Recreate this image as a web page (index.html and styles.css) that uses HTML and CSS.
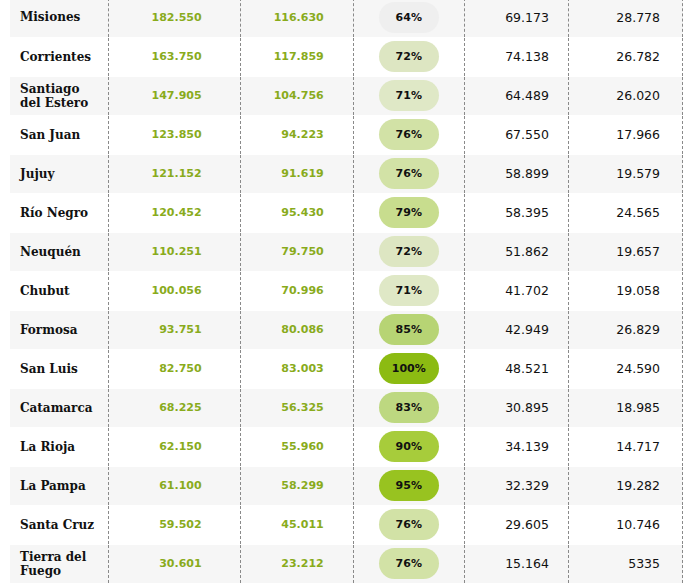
FILE: index.html
```html
<!DOCTYPE html>
<html lang="es">
<head>
<meta charset="utf-8">
<link rel="stylesheet" href="styles.css">
</head>
<body>
<table class="data">
<tbody>
<tr><td class="name">Misiones</td><td class="a">182.550</td><td class="b">116.630</td><td class="p"><span class="pill p64">64%</span></td><td class="c">69.173</td><td class="d">28.778</td></tr>
<tr><td class="name">Corrientes</td><td class="a">163.750</td><td class="b">117.859</td><td class="p"><span class="pill p72">72%</span></td><td class="c">74.138</td><td class="d">26.782</td></tr>
<tr><td class="name">Santiago del Estero</td><td class="a">147.905</td><td class="b">104.756</td><td class="p"><span class="pill p71">71%</span></td><td class="c">64.489</td><td class="d">26.020</td></tr>
<tr><td class="name">San Juan</td><td class="a">123.850</td><td class="b">94.223</td><td class="p"><span class="pill p76">76%</span></td><td class="c">67.550</td><td class="d">17.966</td></tr>
<tr><td class="name">Jujuy</td><td class="a">121.152</td><td class="b">91.619</td><td class="p"><span class="pill p76">76%</span></td><td class="c">58.899</td><td class="d">19.579</td></tr>
<tr><td class="name">Río Negro</td><td class="a">120.452</td><td class="b">95.430</td><td class="p"><span class="pill p79">79%</span></td><td class="c">58.395</td><td class="d">24.565</td></tr>
<tr><td class="name">Neuquén</td><td class="a">110.251</td><td class="b">79.750</td><td class="p"><span class="pill p72">72%</span></td><td class="c">51.862</td><td class="d">19.657</td></tr>
<tr><td class="name">Chubut</td><td class="a">100.056</td><td class="b">70.996</td><td class="p"><span class="pill p71">71%</span></td><td class="c">41.702</td><td class="d">19.058</td></tr>
<tr><td class="name">Formosa</td><td class="a">93.751</td><td class="b">80.086</td><td class="p"><span class="pill p85">85%</span></td><td class="c">42.949</td><td class="d">26.829</td></tr>
<tr><td class="name">San Luis</td><td class="a">82.750</td><td class="b">83.003</td><td class="p"><span class="pill p100">100%</span></td><td class="c">48.521</td><td class="d">24.590</td></tr>
<tr><td class="name">Catamarca</td><td class="a">68.225</td><td class="b">56.325</td><td class="p"><span class="pill p83">83%</span></td><td class="c">30.895</td><td class="d">18.985</td></tr>
<tr><td class="name">La Rioja</td><td class="a">62.150</td><td class="b">55.960</td><td class="p"><span class="pill p90">90%</span></td><td class="c">34.139</td><td class="d">14.717</td></tr>
<tr><td class="name">La Pampa</td><td class="a">61.100</td><td class="b">58.299</td><td class="p"><span class="pill p95">95%</span></td><td class="c">32.329</td><td class="d">19.282</td></tr>
<tr><td class="name">Santa Cruz</td><td class="a">59.502</td><td class="b">45.011</td><td class="p"><span class="pill p76">76%</span></td><td class="c">29.605</td><td class="d">10.746</td></tr>
<tr><td class="name">Tierra del Fuego</td><td class="a">30.601</td><td class="b">23.212</td><td class="p"><span class="pill p76">76%</span></td><td class="c">15.164</td><td class="d">5335</td></tr>
</tbody>
</table>
</body>
</html>
```
FILE: styles.css
```css
html, body {
  margin: 0;
  padding: 0;
  background: #ffffff;
}
.data {
  margin: -2px 0 0 10px;
  border-collapse: collapse;
  table-layout: fixed;
  width: 673px;
  font-family: "DejaVu Sans", Verdana, sans-serif;
  color: #111;
}
.data tr:nth-child(odd) td {
  background: #f6f6f6;
}
.data td {
  height: 39px;
  padding: 0;
  border-bottom: 1px solid #ffffff;
  border-right: 1px dashed #8a8a8a;
  vertical-align: middle;
  box-sizing: border-box;
}
.data td.name {
  width: 98px;
  padding-left: 10px;
  padding-right: 4px;
  font-family: "DejaVu Serif", Georgia, serif;
  font-weight: bold;
  font-size: 12px;
  line-height: 14px;
  color: #111;
}
.data td.a {
  width: 132px;
  text-align: right;
  padding-right: 38px;
}
.data td.b {
  width: 113px;
  text-align: right;
  padding-right: 29px;
}
.data td.a, .data td.b {
  color: #89ab1c;
  font-weight: bold;
  font-size: 11px;
}
.data td.p {
  width: 111px;
  text-align: center;
}
.data td.c {
  width: 104px;
  text-align: right;
  padding-right: 19px;
  font-size: 12.5px;
}
.data td.d {
  width: 114px;
  text-align: right;
  padding-right: 22px;
  font-size: 12.5px;
}
.pill {
  display: inline-block;
  width: 60px;
  height: 31px;
  line-height: 31px;
  border-radius: 16px;
  font-size: 11px;
  font-weight: bold;
  color: #111;
  text-align: center;
  vertical-align: middle;
}
.p64 { background: #efefef; }
.p71 { background: #dfe8c6; }
.p72 { background: #dde6c2; }
.p76 { background: #d2e2a6; }
.p79 { background: #c8dd8e; }
.p83 { background: #bdd880; }
.p85 { background: #b7d474; }
.p90 { background: #a7cc3b; }
.p95 { background: #98c320; }
.p100 { background: #8cbb12; }
```
